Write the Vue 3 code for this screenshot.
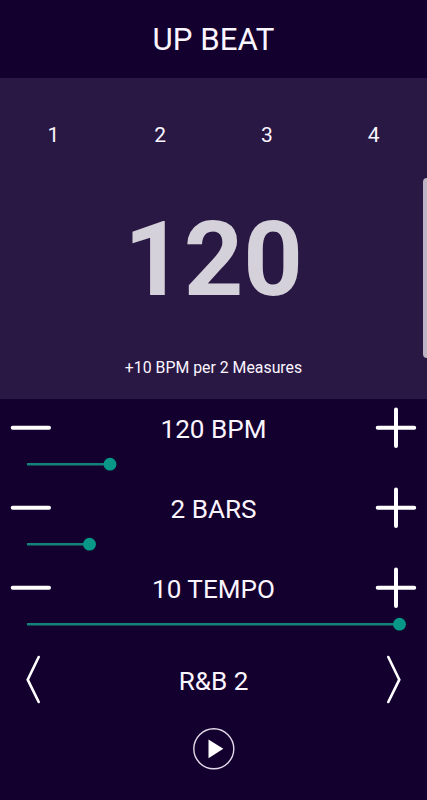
<script setup>
import { ref } from 'vue'

const beats = [1, 2, 3, 4]
const controls = ref([
  { label: '120 BPM', length: 83 },
  { label: '2 BARS', length: 62.5 },
  { label: '10 TEMPO', length: 372.5 },
])
</script>

<template>
  <main class="app">
    <header class="title">UP BEAT</header>

    <section class="panel">
      <div class="beats">
        <span v-for="b in beats" :key="b">{{ b }}</span>
      </div>
      <div class="count">120</div>
      <div class="caption">+10 BPM per 2 Measures</div>
      <div class="edge"></div>
    </section>

    <section class="controls">
      <div v-for="c in controls" :key="c.label" class="control">
        <div class="row">
          <svg class="icon" viewBox="0 0 42 42"><path d="M2.7 20.7H39" /></svg>
          <span class="label">{{ c.label }}</span>
          <svg class="icon" viewBox="0 0 42 42"><path d="M2.7 20.7H39.2M21 2.5V39" /></svg>
        </div>
        <svg class="slider" viewBox="0 0 427 14">
          <path :d="`M27 7.2h${c.length}`" />
          <circle :cx="27 + c.length" cy="7.2" r="6.4" />
        </svg>
      </div>
    </section>

    <section class="style-row">
      <svg class="chevron" viewBox="0 0 16 50"><path d="M13.7 3L2.7 25.7L13.7 48" /></svg>
      <span class="label">R&amp;B 2</span>
      <svg class="chevron" viewBox="0 0 16 50"><path d="M2.3 3L13.3 25.7L2.3 48" /></svg>
    </section>

    <footer class="player">
      <svg class="play" viewBox="0 0 42 42">
        <circle cx="20.8" cy="20.8" r="20" />
        <path d="M15.5 11.6L30.3 20.8L15.5 30.2Z" />
      </svg>
    </footer>
  </main>
</template>

<style>
body {
  margin: 0;
  background: #14002e;
}
</style>

<style scoped>
.app {
  box-sizing: border-box;
  width: 427px;
  height: 800px;
  overflow: hidden;
  background: #14002e;
  color: #fbf5ff;
  font-family: Roboto, "Liberation Sans", sans-serif;
}
.title {
  height: 78px;
  line-height: 80px;
  font-size: 31.2px;
  text-align: center;
}
.panel {
  position: relative;
  height: 321px;
  background: #291843;
  text-align: center;
}
.beats {
  display: grid;
  grid-template-columns: repeat(4, 1fr);
  height: 113px;
  line-height: 115px;
  font-size: 21px;
}
.count {
  height: 135px;
  line-height: 137px;
  font-size: 104px;
  font-weight: 700;
  color: #d5d1da;
}
.caption {
  padding-top: 10px;
  line-height: 64px;
  font-size: 15.85px;
}
.edge {
  position: absolute;
  top: 100px;
  right: 0;
  width: 4px;
  height: 180px;
  border-radius: 4px 0 0 4px;
  background: #bdb4c6;
}
.control {
  height: 80.2px;
}
.row {
  display: flex;
  align-items: center;
  justify-content: space-between;
  height: 58px;
  padding: 0 10px;
}
.label {
  font-size: 26.1px;
  line-height: 32px;
  padding-top: 2px;
}
.icon {
  width: 42px;
  height: 42px;
  fill: none;
  stroke: #fff;
  stroke-width: 4;
  stroke-linecap: round;
}
.slider {
  display: block;
  width: 427px;
  height: 14px;
}
.slider path {
  stroke: #14827b;
  stroke-width: 2.5;
}
.slider circle {
  fill: #079888;
}
.style-row {
  display: flex;
  align-items: center;
  justify-content: space-between;
  height: 79.4px;
  padding: 0 25px;
}
.style-row .label {
  padding-top: 3px;
}
.chevron {
  width: 16px;
  height: 50px;
  fill: none;
  stroke: #fff;
  stroke-width: 2.6;
  stroke-linecap: round;
}
.player {
  display: flex;
  justify-content: center;
  padding-top: 9px;
}
.play {
  width: 42px;
  height: 42px;
}
.play circle {
  fill: none;
  stroke: #e3dbea;
  stroke-width: 1.4;
}
.play path {
  fill: #fff;
}
</style>
